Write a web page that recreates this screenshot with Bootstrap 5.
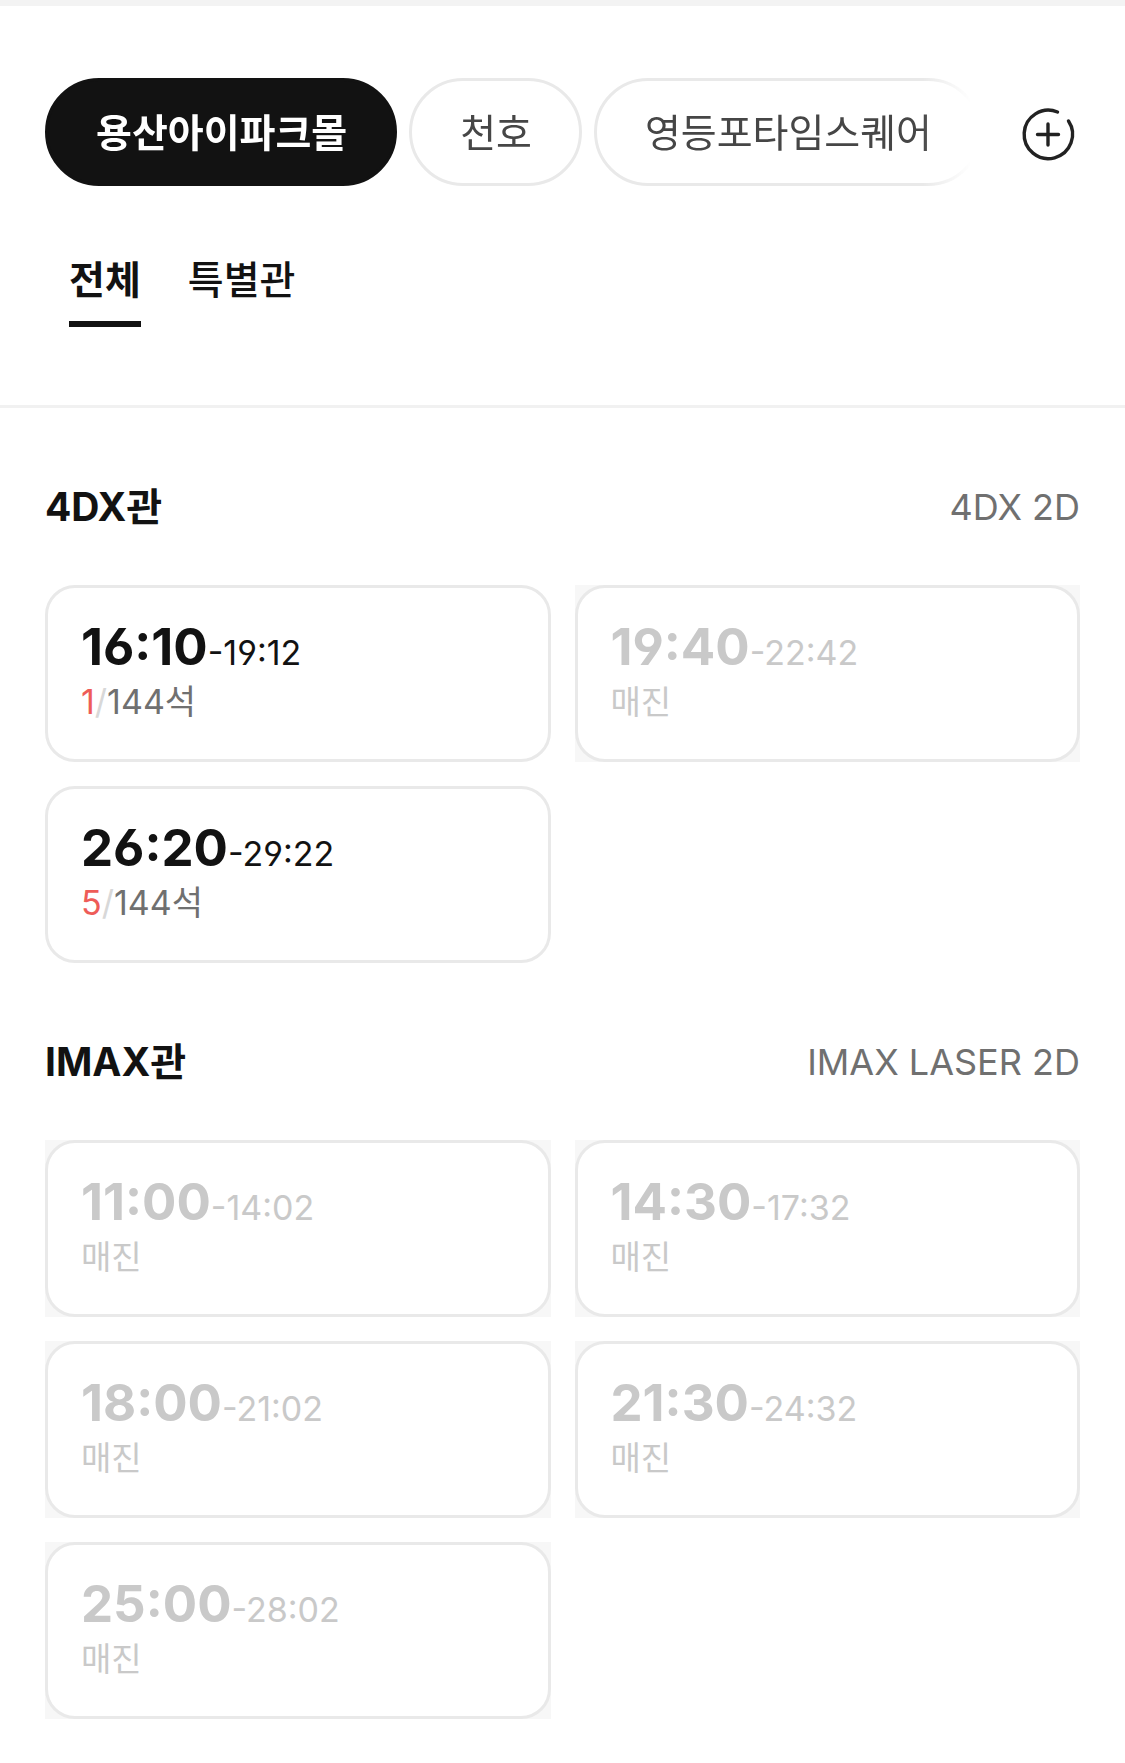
<!DOCTYPE html>
<html lang="ko">
<head>
<meta charset="utf-8">
<meta name="viewport" content="width=device-width, initial-scale=1">
<title>상영시간표</title>
<link href="https://cdn.jsdelivr.net/npm/bootstrap@5.3.0/dist/css/bootstrap.min.css" rel="stylesheet">
<style>
  body { font-family: Inter, "Noto Sans CJK KR", sans-serif; font-feature-settings: "cv03", "cv04"; color: #121212; background: #fff; border-top: 6px solid #f3f3f3; }
  button { font-feature-settings: inherit; }
  .page-gutter { padding-left: 45px; padding-right: 45px; }
  .top-area { padding-top: 72px; padding-bottom: 78px; border-bottom: 3px solid #f1f1f1; }
  .theater-strip { gap: 12px; margin-right: 41px; -webkit-mask-image: linear-gradient(to left, transparent 0, #000 48px); mask-image: linear-gradient(to left, transparent 0, #000 48px); }
  .theater-btn { flex: none; padding: 25px 47px 23px 48px; border: 3px solid #e9e9e9; border-radius: 54px; background: #fff; color: #464646; font-size: 39px; line-height: 54px; }
  .theater-btn.selected { background: #121212; border-color: #121212; color: #fff; font-weight: 700; }
  .add-btn { flex: none; border: 0; background: none; padding: 0; margin-right: -4px; }
  .hall-tabs { gap: 47px; margin-top: 67px; padding-left: 24px; }
  .hall-tabs a { color: #121212; text-decoration: none; font-size: 39px; font-weight: 500; line-height: 54px; padding-bottom: 14px; border-bottom: 6px solid transparent; }
  .hall-tabs a.current { font-weight: 700; border-color: #121212; }
  .hall-section { padding-top: 72px; }
  .hall-head { margin-bottom: 51px; }
  .hall-title { font-size: 39px; font-weight: 700; line-height: 54px; margin: 0; }
  .hall-type { font-size: 36px; line-height: 54px; color: #707070; }
  .show-grid { --bs-gutter-x: 24px; --bs-gutter-y: 24px; }
  .show-btn { display: block; width: 100%; text-align: left; padding: 28px 33px 33px; border: 3px solid #e9e9e9; border-radius: 30px; background: #fff; color: #121212; }
  .start-time { display: block; font-size: 51px; font-weight: 700; line-height: 62px; }
  .end-time { font-size: 34px; font-weight: 400; line-height: 1; }
  .seat-line { display: block; font-size: 34px; line-height: 48px; color: #707070; }
  .seat-left { color: #ee5c58; }
  .seat-sep { color: #d8d8d8; }
  .closed-show { background: #f7f7f7; }
  .closed-show .show-btn, .closed-show .seat-line { color: #c9c9c9; }
  .closed-show .seat-line { font-size: 33px; }
</style>
</head>
<body>
<header class="top-area page-gutter">
  <div class="d-flex align-items-center">
    <div class="theater-strip d-flex flex-grow-1 overflow-hidden">
      <button type="button" class="theater-btn selected">용산아이파크몰</button>
      <button type="button" class="theater-btn">천호</button>
      <button type="button" class="theater-btn">영등포타임스퀘어</button>
    </div>
    <button type="button" class="add-btn" aria-label="극장 추가">
      <svg class="d-block" width="72" height="78" viewBox="0 1 72 78" fill="none" stroke="#222" stroke-width="3.4" stroke-linecap="round">
        <path d="M45.500 20A24.200 24.200 0 1 0 56.500 29M36 32v21M25.500 42.500h21"/>
      </svg>
    </button>
  </div>
  <nav class="hall-tabs d-flex" aria-label="상영관 종류">
    <a href="#all" class="current" aria-current="page">전체</a>
    <a href="#special">특별관</a>
  </nav>
</header>
<main class="page-gutter" id="all">
  <section class="hall-section">
    <div class="hall-head d-flex justify-content-between align-items-center">
      <h2 class="hall-title">4DX관</h2><span class="hall-type">4DX 2D</span>
    </div>
    <div class="row row-cols-2 show-grid">
      <div class="col"><button type="button" class="show-btn"><span class="start-time">16:10<span class="end-time">-19:12</span></span><span class="seat-line"><span class="seat-left">1</span><span class="seat-sep">/</span>144석</span></button></div>
      <div class="col"><div class="closed-show"><button type="button" class="show-btn" disabled><span class="start-time">19:40<span class="end-time">-22:42</span></span><span class="seat-line">매진</span></button></div></div>
      <div class="col"><button type="button" class="show-btn"><span class="start-time">26:20<span class="end-time">-29:22</span></span><span class="seat-line"><span class="seat-left">5</span><span class="seat-sep">/</span>144석</span></button></div>
    </div>
  </section>
  <section class="hall-section" id="special">
    <div class="hall-head d-flex justify-content-between align-items-center">
      <h2 class="hall-title">IMAX관</h2><span class="hall-type">IMAX LASER 2D</span>
    </div>
    <div class="row row-cols-2 show-grid">
      <div class="col"><div class="closed-show"><button type="button" class="show-btn" disabled><span class="start-time">11:00<span class="end-time">-14:02</span></span><span class="seat-line">매진</span></button></div></div>
      <div class="col"><div class="closed-show"><button type="button" class="show-btn" disabled><span class="start-time">14:30<span class="end-time">-17:32</span></span><span class="seat-line">매진</span></button></div></div>
      <div class="col"><div class="closed-show"><button type="button" class="show-btn" disabled><span class="start-time">18:00<span class="end-time">-21:02</span></span><span class="seat-line">매진</span></button></div></div>
      <div class="col"><div class="closed-show"><button type="button" class="show-btn" disabled><span class="start-time">21:30<span class="end-time">-24:32</span></span><span class="seat-line">매진</span></button></div></div>
      <div class="col"><div class="closed-show"><button type="button" class="show-btn" disabled><span class="start-time">25:00<span class="end-time">-28:02</span></span><span class="seat-line">매진</span></button></div></div>
    </div>
  </section>
</main>
<script src="https://cdn.jsdelivr.net/npm/bootstrap@5.3.0/dist/js/bootstrap.bundle.min.js"></script>
</body>
</html>
